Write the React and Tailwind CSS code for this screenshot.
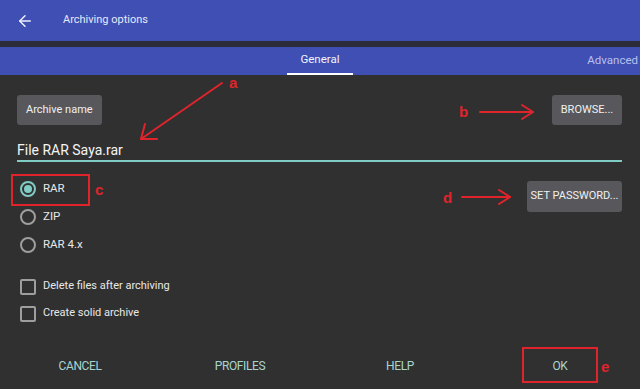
import React, { useState } from 'react';
import { ArrowLeft } from 'lucide-react';

const font = { fontFamily: 'Roboto, "Open Sans", sans-serif' };

const Radio = ({ label, checked, onClick }) => (
  <div className="flex h-[28px] items-center cursor-pointer" onClick={onClick}>
    <div
      className={`ml-[3px] flex h-[16px] w-[16px] items-center justify-center rounded-full border-2 ${
        checked ? 'border-[#80cbc4]' : 'border-[#9e9e9e]'
      }`}
    >
      {checked && <div className="h-[8px] w-[8px] rounded-full bg-[#80cbc4]" />}
    </div>
    <span className="ml-[7px] text-[11.5px] text-[#e8e8e8]">{label}</span>
  </div>
);

const Check = ({ label }) => (
  <div className="flex h-[27px] items-center">
    <div className="ml-[3px] h-[16px] w-[16px] rounded-[2px] border-2 border-[#9e9e9e]" />
    <span className="ml-[7px] text-[11px] text-[#e8e8e8]">{label}</span>
  </div>
);

export default function App() {
  const [format, setFormat] = useState('RAR');

  return (
    <div className="relative flex h-[389px] w-[640px] flex-col overflow-hidden bg-[#303030]" style={font}>
      {/* toolbar */}
      <div className="flex h-[41px] items-center bg-[#3f4fb4]">
        <ArrowLeft size={18} strokeWidth={2} className="ml-[16px] text-[#eef0fb]" />
        <span className="ml-[29px] text-[11px] text-[#e6e9f8]">Archiving options</span>
      </div>
      <div className="h-[6px] bg-[#2b2b3a]" />
      {/* tabs */}
      <div className="flex h-[28px] bg-[#3f4fb4]">
        <div className="ml-[287px] flex w-[66px] flex-col">
          <div className="flex flex-1 items-center justify-center text-[11.5px] text-[#f2f3fb]">General</div>
          <div className="h-[2px] bg-white" />
        </div>
        <div className="ml-auto mr-[2px] flex items-center text-[11.5px] text-[#b9c1ee]">Advanced</div>
      </div>

      {/* body */}
      <div className="flex flex-1 flex-col pl-[17px] pr-[18px]">
        <div className="mt-[20px] flex h-[30px] justify-between">
          <button className="rounded-[3px] bg-[#58585c] px-[9px] text-[11px] text-[#f0f0f0]">Archive name</button>
          <button className="w-[70px] rounded-[3px] bg-[#58585c] text-[11px] text-[#f0f0f0]">BROWSE...</button>
        </div>

        <div className="mt-[15px] flex h-[22px] flex-col border-b-2 border-[#80cbc4]">
          <span className="text-[14px] leading-[20px] text-[#f4f4f4]">File RAR Saya.rar</span>
        </div>

        <div className="mt-[13px] flex justify-between">
          <div className="flex flex-col">
            {['RAR', 'ZIP', 'RAR 4.x'].map((f) => (
              <Radio key={f} label={f} checked={format === f} onClick={() => setFormat(f)} />
            ))}
          </div>
          <button className="mt-[6px] h-[31px] w-[95px] rounded-[3px] bg-[#58585c] text-[11px] text-[#f0f0f0]">
            SET PASSWORD...
          </button>
        </div>

        <div className="mt-[14px] flex flex-col">
          <Check label="Delete files after archiving" />
          <Check label="Create solid archive" />
        </div>

        <div className="-mx-[17px] mr-[-18px] mt-auto grid h-[46px] grid-cols-4 items-center">
          {['CANCEL', 'PROFILES', 'HELP', 'OK'].map((b) => (
            <div key={b} className="text-center text-[12px] tracking-[-0.4px] text-[#a7d6cf]">
              {b}
            </div>
          ))}
        </div>
      </div>

      {/* annotations */}
      <svg className="pointer-events-none absolute left-0 top-0" width="640" height="389">
        <g stroke="#e0242c" strokeWidth="2" fill="none" strokeLinecap="round">
          <line x1="222" y1="83" x2="141" y2="139" />
          <line x1="141" y1="139" x2="145" y2="124" />
          <line x1="141" y1="139" x2="157" y2="139" />
          <line x1="480" y1="112" x2="533" y2="112" />
          <line x1="533" y1="112" x2="522" y2="105" />
          <line x1="533" y1="112" x2="522" y2="119" />
          <line x1="462" y1="197" x2="510" y2="197" />
          <line x1="510" y1="197" x2="499" y2="190" />
          <line x1="510" y1="197" x2="499" y2="204" />
          <rect x="12" y="175" width="77" height="30" />
          <rect x="523" y="348" width="74" height="34" />
        </g>
        <g fill="#e0242c" fontFamily="'Liberation Sans', sans-serif" fontWeight="700" fontSize="15">
          <text x="229" y="88">a</text>
          <text x="459" y="117">b</text>
          <text x="95" y="195">c</text>
          <text x="443" y="203">d</text>
          <text x="601" y="372">e</text>
        </g>
      </svg>
    </div>
  );
}
